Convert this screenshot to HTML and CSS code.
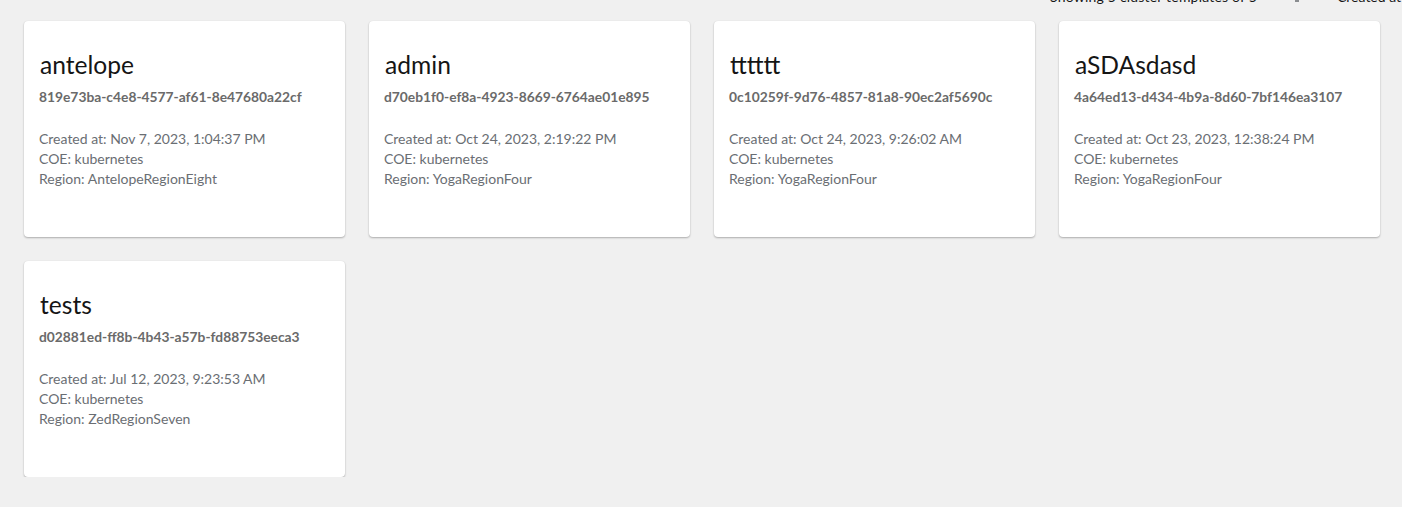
FILE: index.html
```html
<!DOCTYPE html>
<html>
<head>
<meta charset="utf-8">
<link rel="stylesheet" href="styles.css">
</head>
<body>
<div class="page">
  <div class="toolbar">
    <span class="count">Showing 5 cluster templates of 5</span>
    <span class="sort-icon"></span>
    <span class="sort">Created at</span>
  </div>
  <div class="grid">
    <div class="card">
      <div class="title">antelope</div>
      <div class="uid">819e73ba-c4e8-4577-af61-8e47680a22cf</div>
      <div class="details">
        <div>Created at: Nov 7, 2023, 1:04:37 PM</div>
        <div>COE: kubernetes</div>
        <div>Region: AntelopeRegionEight</div>
      </div>
    </div>
    <div class="card">
      <div class="title">admin</div>
      <div class="uid">d70eb1f0-ef8a-4923-8669-6764ae01e895</div>
      <div class="details">
        <div>Created at: Oct 24, 2023, 2:19:22 PM</div>
        <div>COE: kubernetes</div>
        <div>Region: YogaRegionFour</div>
      </div>
    </div>
    <div class="card">
      <div class="title">tttttt</div>
      <div class="uid">0c10259f-9d76-4857-81a8-90ec2af5690c</div>
      <div class="details">
        <div>Created at: Oct 24, 2023, 9:26:02 AM</div>
        <div>COE: kubernetes</div>
        <div>Region: YogaRegionFour</div>
      </div>
    </div>
    <div class="card">
      <div class="title">aSDAsdasd</div>
      <div class="uid">4a64ed13-d434-4b9a-8d60-7bf146ea3107</div>
      <div class="details">
        <div>Created at: Oct 23, 2023, 12:38:24 PM</div>
        <div>COE: kubernetes</div>
        <div>Region: YogaRegionFour</div>
      </div>
    </div>
    <div class="card">
      <div class="title">tests</div>
      <div class="uid">d02881ed-ff8b-4b43-a57b-fd88753eeca3</div>
      <div class="details">
        <div>Created at: Jul 12, 2023, 9:23:53 AM</div>
        <div>COE: kubernetes</div>
        <div>Region: ZedRegionSeven</div>
      </div>
    </div>
  </div>
</div>
</body>
</html>
```
FILE: styles.css
```css
* { box-sizing: border-box; }
html, body { margin: 0; padding: 0; }
body {
  background: #f0f0f0;
  font-family: "Lato", "Open Sans", sans-serif;
  overflow: hidden;
}
.page {
  padding: 0 22px 0 24px;
}
.toolbar {
  display: flex;
  align-items: flex-end;
  justify-content: flex-end;
  height: 20px;
  margin-top: -13px;
  font-size: 14px;
  line-height: 20px;
  color: #151515;
  white-space: nowrap;
}
.count { margin-right: 38px; letter-spacing: 0.2px; }
.sort-icon {
  flex: 0 0 4px;
  height: 2px;
  background: #8a8d90;
  margin-right: 38px;
  margin-bottom: 5px;
}
.sort { flex: 0 0 43px; min-width: 0; }
.grid {
  display: grid;
  grid-template-columns: repeat(4, 321px);
  gap: 24px;
  margin-top: 14px;
}
.card {
  background: #fff;
  height: 216px;
  border-radius: 4px;
  box-shadow: 0 1px 2px rgba(0,0,0,0.28), 0 0 1px rgba(0,0,0,0.08);
  padding: 31px 15px 0 15px;
}
.title {
  font-size: 24.6px;
  line-height: 26px;
  color: #151515;
  padding-left: 1px;
}
.uid {
  margin-top: 10px;
  font-size: 13.8px;
  line-height: 18px;
  font-weight: 700;
  color: #6a6a6a;
}
.details {
  margin-top: 23px;
  font-size: 14px;
  line-height: 20px;
  color: #6a6e73;
}
```
